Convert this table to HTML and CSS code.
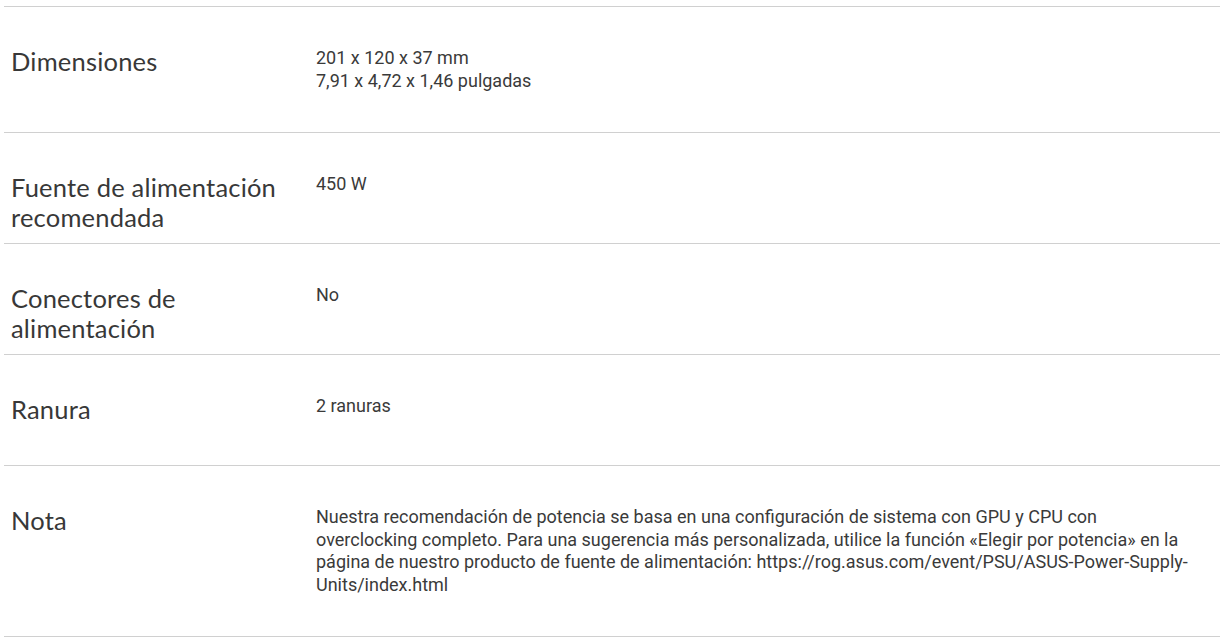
FILE: index.html
```html
<!DOCTYPE html>
<html lang="es">
<head>
<meta charset="utf-8">
<title>Especificaciones</title>
<link rel="stylesheet" href="styles.css">
</head>
<body>
<div class="specs">
  <div class="row">
    <div class="label">Dimensiones</div>
    <div class="value">201 x 120 x 37 mm<br>7,91 x 4,72 x 1,46 pulgadas</div>
  </div>
  <div class="row">
    <div class="label">Fuente de alimentación recomendada</div>
    <div class="value">450 W</div>
  </div>
  <div class="row">
    <div class="label">Conectores de alimentación</div>
    <div class="value">No</div>
  </div>
  <div class="row">
    <div class="label">Ranura</div>
    <div class="value">2 ranuras</div>
  </div>
  <div class="row">
    <div class="label">Nota</div>
    <div class="value">Nuestra recomendación de potencia se basa en una configuración de sistema con GPU y CPU con overclocking completo. Para una sugerencia más personalizada, utilice la función «Elegir por potencia» en la página de nuestro producto de fuente de alimentación: https://rog.asus.com/event/PSU/ASUS-Power-Supply-Units/index.html</div>
  </div>
</div>
</body>
</html>
```
FILE: styles.css
```css
html, body {
  margin: 0;
  padding: 0;
  background: #fff;
}
.specs {
  width: 1216px;
  margin: 6px 0 0 4px;
  border-top: 1px solid #d0d0d0;
}
.row {
  display: grid;
  grid-template-columns: 304px 1fr;
  align-items: start;
  padding: 40px 0;
  border-bottom: 1px solid #d0d0d0;
  min-height: 30px;
  box-sizing: content-box;
}
.label {
  padding: 0 7px;
  height: 30px;
  margin-top: -1px;
  font-family: Lato, "Noto Sans", sans-serif;
  font-size: 25.5px;
  line-height: 30px;
  color: #383838;
  letter-spacing: 0.2px;
}
.value {
  padding: 0 24px 0 8px;
  font-family: Roboto, "Liberation Sans", sans-serif;
  font-size: 18px;
  line-height: 22.5px;
  color: #3a3a3a;
}
```
